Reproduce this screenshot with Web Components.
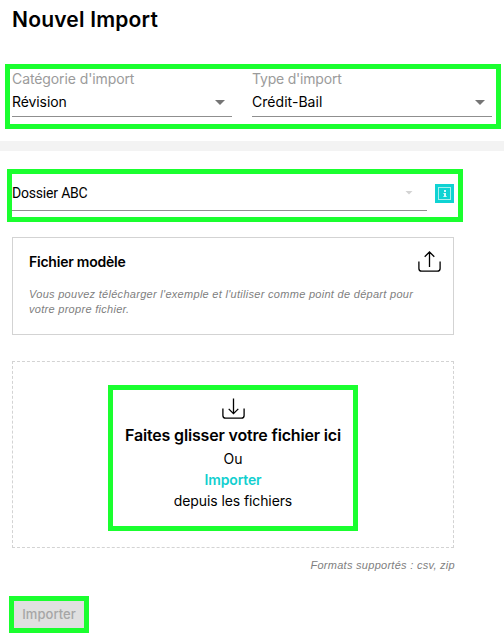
<!DOCTYPE html>
<html lang="fr">
<head>
<meta charset="utf-8">
<title>Nouvel Import</title>
<style>
html, body { margin: 0; background: #fff; overflow: hidden; }
body { width: 504px; height: 633px; font-family: Inter, "Liberation Sans", sans-serif; color: #000; }
</style>
</head>
<body>
<script>
function define(name, html) {
  const template = document.createElement('template');
  template.innerHTML = html;
  customElements.define(name, class extends HTMLElement {
    constructor() {
      super();
      this.attachShadow({ mode: 'open' }).append(template.content.cloneNode(true));
    }
  });
}

// Green outline drawn round a group of controls.
define('focus-frame', `
<style>:host { display: block; box-sizing: border-box; border: 5px solid #1aff2f; }</style>
<slot></slot>`);

// Select box with an optional label over its value.
define('select-field', `
<style>
:host { display: block; box-sizing: border-box; border-bottom: 1px solid #8f8f8f; font-size: 14px; }
.label { display: block; color: #9b9b9b; line-height: 19px; letter-spacing: var(--label-track, -.1px); white-space: nowrap; }
.row { display: flex; align-items: center; justify-content: space-between; height: var(--row, 28px); padding-right: var(--pad, 7px); }
.value { line-height: 20px; white-space: nowrap; padding-top: var(--drop, 0); }
.arrow { width: var(--arrow, 10px); height: calc(var(--arrow, 10px) / 2); background: var(--arrow-color, #757575); clip-path: polygon(0 0, 100% 0, 50% 100%); margin-top: 1px; }
</style>
<slot name="label" class="label"></slot>
<div class="row"><span class="value"><slot></slot></span><span class="arrow"></span></div>`);

define('info-badge', `
<style>:host { display: block; width: 19px; height: 19px; background: #0fd3d3; } svg { display: block; }</style>
<svg width="19" height="19" viewBox="0 0 19 19">
<rect x="3.5" y="3.5" width="12" height="12" fill="none" stroke="#a5f0ee"/>
<path d="M9 6h2v2H9zM9 9h2v4H9z" fill="#d6f9f8"/>
<path d="M8 9h1v1H8zM8 12h1v1H8zM11 12h1v1h-1z" fill="#8beae8"/>
</svg>`);

// Open tray with an arrow going up or down.
define('tray-icon', `
<style>
:host { display: block; width: 23px; height: 22px; }
svg { display: block; fill: none; stroke: #000; stroke-width: 1.3; }
.down, :host([down]) .up { display: none; }
:host([down]) .down { display: inline; }
</style>
<svg width="23" height="22" viewBox="0 0 23 22">
<path d="M.9 10.5v6.9q0 2.7 2.7 2.7h15.8q2.7 0 2.7-2.7v-6.9"/>
<path class="up" d="M11.5 16V1M6.7 5.7 11.5 1l4.8 4.7"/>
<path class="down" d="M11.5.5v15M6.7 10.9l4.8 4.7 4.8-4.7"/>
</svg>`);

define('model-card', `
<style>
:host { display: block; box-sizing: border-box; width: 442px; height: 98px; border: 1px solid #d3d3d3; padding: 13px 12.5px 0 16px; }
header { display: flex; justify-content: space-between; height: 22px; }
h2 { margin: 0; font-size: 14px; line-height: 21px; font-weight: 600; letter-spacing: -.23px; }
p { margin: 14px 0 0; font: italic 11px/15px "Liberation Sans", sans-serif; color: #808080; letter-spacing: .29px; white-space: nowrap; }
</style>
<header><h2><slot name="title"></slot></h2><tray-icon></tray-icon></header>
<p><slot></slot></p>`);

define('drop-zone', `
<style>
:host { display: block; box-sizing: border-box; width: 442px; height: 187px; border: 1px dashed #d3d3d3; padding: 23px 0 0 95px; }
focus-frame { width: 250px; height: 146px; }
.stack { display: flex; flex-direction: column; align-items: center; padding-top: 8px; font-size: 14px; line-height: 21px; letter-spacing: -.1px; white-space: nowrap; }
strong { font-size: 16px; line-height: 26px; padding-top: 2px; font-weight: 600; letter-spacing: -.167px; }
a { color: #12cfcf; font-weight: 600; letter-spacing: -.16px; }
</style>
<focus-frame><div class="stack">
<tray-icon down></tray-icon>
<strong>Faites glisser votre fichier ici</strong>
<span>Ou</span><a>Importer</a><span>depuis les fichiers</span>
</div></focus-frame>`);

define('import-button', `
<style>
:host { display: block; }
button { display: block; width: 100%; height: 27px; border: 0; padding: 0; background: #e0e0e0; color: #a6a6a6; font: 500 13px/27px Inter, sans-serif; letter-spacing: .05px; }
</style>
<button disabled><slot></slot></button>`);

define('import-page', `
<style>
:host { display: flex; flex-direction: column; align-items: flex-start; }
h1 { margin: 6px 0 0 12px; font-size: 21px; line-height: 28px; font-weight: 600; letter-spacing: .2px; height: 58px; white-space: nowrap; }
.kinds { width: 496px; height: 65px; margin-left: 5px; }
.pair { display: flex; gap: 20px; padding: 0 4px 0 2px; }
.pair select-field:first-child { width: 220px; letter-spacing: -.09px; }
.pair select-field:last-child { width: 240px; --label-track: -.2px; letter-spacing: .04px; }
.band { width: 504px; height: 10px; margin-top: 12px; background: #f3f3f3; }
.folder { width: 456px; height: 53px; margin: 18px 0 0 7px; }
.line { display: flex; align-items: flex-start; gap: 8px; }
.line select-field { width: 415px; font-family: Roboto, sans-serif; letter-spacing: -.19px; --row: 36px; --drop: 2px; --pad: 14px; --arrow: 8px; --arrow-color: #d3d3d3; }
.line info-badge { margin-top: 10px; }
model-card { margin: 15px 0 0 12px; }
drop-zone { margin: 26px 0 0 12px; }
.formats { width: 455px; margin-top: 10px; text-align: right; font: italic 11px/15px "Liberation Sans", sans-serif; color: #808080; letter-spacing: .28px; }
.submit { width: 80px; height: 37px; margin: 23px 0 0 9px; }
</style>
<h1>Nouvel Import</h1>
<focus-frame class="kinds"><div class="pair">
<select-field><span slot="label">Catégorie d'import</span>Révision</select-field>
<select-field><span slot="label">Type d'import</span>Crédit-Bail</select-field>
</div></focus-frame>
<div class="band"></div>
<focus-frame class="folder"><div class="line">
<select-field>Dossier ABC</select-field><info-badge></info-badge>
</div></focus-frame>
<model-card><span slot="title">Fichier modèle</span>Vous pouvez télécharger l'exemple et l'utiliser comme point de départ pour<br>votre propre fichier.</model-card>
<drop-zone></drop-zone>
<div class="formats">Formats supportés : csv, zip</div>
<focus-frame class="submit"><import-button>Importer</import-button></focus-frame>`);
</script>
<import-page></import-page>
</body>
</html>
